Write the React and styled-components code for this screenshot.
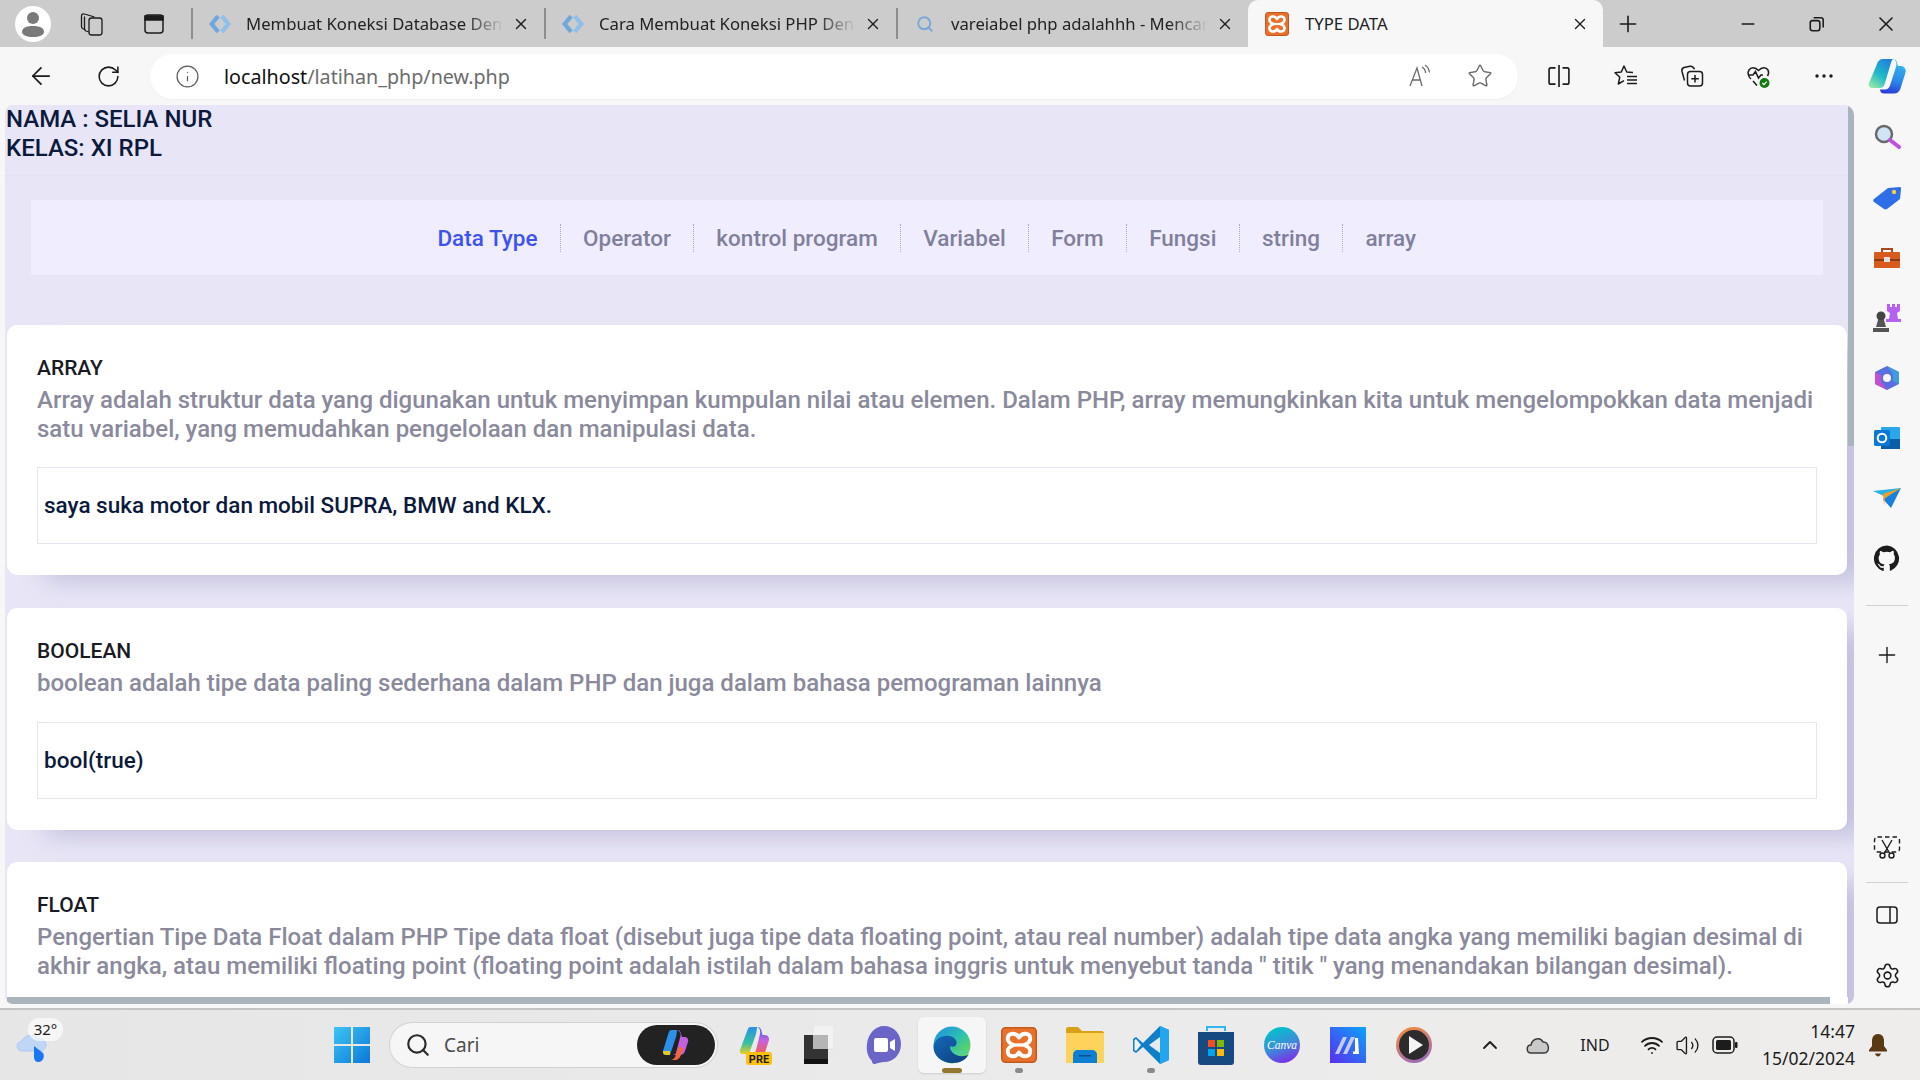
import React from 'react'
import styled, {createGlobalStyle} from 'styled-components'
import {ArrowLeft, RotateCw, Info, Star, Plus, Minus, X, Search, ChevronUp, Settings, Volume2, Wifi} from 'lucide-react'

const GlobalStyle = createGlobalStyle`
    html, body {
        margin: 0;
        padding: 0;
        width: 1920px;
        height: 1080px;
        overflow: hidden;
        background: #f7f7f7;
    }
    * {
        box-sizing: border-box;
    }
`

const Screen = styled.div`
    width: 1920px;
    height: 1080px;
    display: flex;
    flex-direction: column;
    overflow: hidden;
    font-family: "Noto Sans", "Liberation Sans", sans-serif;
    color: #1c1c1c;
`

/* tab strip */
const TabStrip = styled.div`
    height: 47px;
    display: flex;
    background: #cccccc;
    flex: none;
`

const StripActions = styled.div`
    width: 191px;
    height: 47px;
    display: flex;
    align-items: center;
    flex: none;
`

const StripSlot = styled.div`
    width: ${props => props.$width}px;
    display: flex;
    align-items: center;
    justify-content: center;
    flex: none;
`

const Avatar = styled.div`
    width: 36px;
    height: 36px;
    border-radius: 50%;
    background: #ffffff;
    display: flex;
    align-items: center;
    justify-content: center;
`

const Tab = styled.div`
    width: ${props => props.$width}px;
    height: 47px;
    padding: 0 14px 0 17px;
    display: flex;
    align-items: center;
    flex: none;
    position: relative;
    background: ${props => props.$active ? '#f7f7f7' : 'transparent'};
    border-radius: ${props => props.$active ? '10px 10px 0 0' : '0'};
    ${props => props.$active ? '' : `
        &::before {
            content: "";
            position: absolute;
            left: 0;
            top: 8px;
            bottom: 8px;
            width: 1.5px;
            background: #8e8e8e;
        }
    `}
`

const TabIcon = styled.div`
    width: 24px;
    height: 24px;
    flex: none;
    display: flex;
    align-items: center;
    justify-content: center;
`

const TabTitle = styled.div`
    flex: 1;
    margin-left: ${props => props.$active ? 16 : 14}px;
    font-size: 16.7px;
    line-height: 22px;
    white-space: nowrap;
    overflow: hidden;
    color: #222222;
    ${props => props.$active ? '' : `
        -webkit-mask-image: linear-gradient(to right, #000 85%, transparent 100%);
        mask-image: linear-gradient(to right, #000 85%, transparent 100%);
    `}
`

const TabClose = styled(X)`
    flex: none;
    margin-left: 8px;
    color: #1c1c1c;
`

const NewTab = styled.div`
    width: 50px;
    display: flex;
    align-items: center;
    justify-content: center;
    flex: none;
`

const WindowButtons = styled.div`
    margin-left: auto;
    display: flex;
    height: 47px;
`

const WindowButton = styled.div`
    width: 69px;
    display: flex;
    align-items: center;
    justify-content: center;
`

/* toolbar */
const Toolbar = styled.div`
    height: 57px;
    padding-top: 1px;
    display: flex;
    align-items: center;
    background: #f7f7f7;
    flex: none;
`

const ToolSlot = styled.div`
    width: ${props => props.$width}px;
    height: 45px;
    flex: none;
    display: flex;
    align-items: center;
    justify-content: center;
`

const AddressBar = styled.div`
    width: 1368px;
    height: 45px;
    margin-left: 16px;
    margin-right: 7px;
    flex: none;
    background: #ffffff;
    border-radius: 23px;
    display: flex;
    align-items: center;
    box-shadow: 0 1px 2px rgba(0, 0, 0, 0.04);
`

const Url = styled.div`
    font-size: 19.7px;
    flex: 1;
    color: #111111;
    span {
        color: #6c6c6c;
    }
`

/* middle row */
const Middle = styled.div`
    height: 904px;
    display: flex;
    flex: none;
    background: #f7f7f7;
`

const Page = styled.div`
    width: 1849px;
    height: 899px;
    margin-left: 5px;
    margin-top: 1px;
    position: relative;
    overflow: hidden;
    flex: none;
    background: #e8e6f6;
    border-radius: 8px 10px 8px 8px;
    font-family: Roboto, "Liberation Sans", sans-serif;
`

const PageHeader = styled.div`
    height: 70px;
    padding-left: 1px;
    font-size: 24px;
    font-weight: 500;
    line-height: 29px;
    color: #0b1a3c;
    background: #e8e6f6;
    box-shadow: 0 1px 2px rgba(120, 120, 170, 0.06);
`

const Nav = styled.nav`
    height: 75px;
    margin: 25px 31px 50px 26px;
    background: #f0eefe;
    display: flex;
    align-items: center;
    justify-content: center;
`

const NavLink = styled.a`
    font-size: 22.5px;
    font-weight: 500;
    line-height: 28px;
    padding: 0 22.5px 0 22px;
    color: ${props => props.$active ? '#3d53f0' : '#80809c'};
    border-left: ${props => props.$first ? 'none' : '1px dotted #a8a8c4'};
`

const Cards = styled.div`
    display: flex;
    flex-direction: column;
    margin: 0 7px 0 2px;
`

const Card = styled.section`
    background: #ffffff;
    border-radius: 10px;
    padding: 31px 30px 31px;
    margin-bottom: ${props => props.$gap}px;
    box-shadow: 30px 14px 26px -8px rgba(110, 105, 170, 0.3);
`

const CardTitle = styled.h3`
    margin: 0;
    font-size: 21px;
    font-weight: 500;
    line-height: 24px;
    color: #1a1a24;
`

const CardText = styled.p`
    margin: 6px 0 ${props => props.$after}px;
    font-size: 24px;
    font-weight: 500;
    line-height: 29px;
    color: #8a8a9c;
`

const Output = styled.div`
    height: 77px;
    border: 1px solid #e6e6f2;
    padding: 0 6px 2px;
    display: flex;
    align-items: center;
    font-size: 22.5px;
    font-weight: 500;
    color: #0b1a3c;
`

const VScroll = styled.div`
    position: absolute;
    top: 0;
    right: 0;
    width: 6px;
    height: 341px;
    background: #aab4bc;
`

const HScroll = styled.div`
    position: absolute;
    left: 2px;
    bottom: 0;
    width: 1823px;
    height: 7px;
    background: #aab4bc;
`

const HTrackEnd = styled.div`
    position: absolute;
    left: 1825px;
    right: 6px;
    bottom: 0;
    height: 7px;
    background: #ffffff;
`

const Sidebar = styled.aside`
    flex: 1;
    display: flex;
    flex-direction: column;
    align-items: center;
`

const SideSlot = styled.div`
    height: ${props => props.$height || 60}px;
    width: 100%;
    display: flex;
    align-items: center;
    justify-content: center;
    flex: none;
`

const SideRule = styled.div`
    width: 42px;
    height: 1px;
    background: #d0d0d0;
    flex: none;
`

const SideSpacer = styled.div`
    flex: 1;
`

/* taskbar */
const Taskbar = styled.footer`
    height: 72px;
    flex: none;
    display: flex;
    align-items: center;
    position: relative;
    background: linear-gradient(to right, #e6e6e6, #ebebeb 60%, #efedeb);
    border-top: 2px solid #c4c4c4;
`

const Weather = styled.div`
    width: 66px;
    height: 70px;
    position: relative;
    flex: none;
    margin-right: 253px;
    display: flex;
    align-items: center;
    justify-content: center;
`

const Temp = styled.div`
    position: absolute;
    left: 28px;
    top: 8px;
    width: 35px;
    height: 23px;
    border-radius: 12px;
    background: rgba(255, 255, 255, 0.65);
    font-size: 15px;
    line-height: 23px;
    text-align: center;
    color: #1c1c1c;
`

const TaskSlot = styled.div`
    width: ${props => props.$width || 66}px;
    height: 56px;
    flex: none;
    position: relative;
    display: flex;
    align-items: center;
    justify-content: center;
    border-radius: 6px;
    ${props => props.$active ? `
        background: #f6f6f6;
        box-shadow: 0 1px 2px rgba(0, 0, 0, 0.12);
    ` : ''}
`

const RunDot = styled.div`
    position: absolute;
    left: 50%;
    bottom: 0;
    transform: translateX(-50%);
    width: ${props => props.$wide ? 20 : 8}px;
    height: 5px;
    border-radius: 3px;
    background: ${props => props.$wide ? '#95782f' : '#8a8a8a'};
`

const SearchPill = styled.div`
    width: 327px;
    height: 44px;
    margin-left: 5px;
    margin-right: 5px;
    flex: none;
    position: relative;
    display: flex;
    align-items: center;
    padding-left: 15px;
    background: #f6f6f6;
    border-radius: 22px;
    box-shadow: 0 0 0 1px #d2d2d2;
    font-size: 19px;
    color: #4c4c4c;
`

const SearchLabel = styled.span`
    margin-left: 13px;
`

const CopilotPill = styled.div`
    position: absolute;
    right: 2px;
    top: 2px;
    width: 78px;
    height: 40px;
    border-radius: 20px;
    background: #222222;
    display: flex;
    align-items: center;
    justify-content: center;
`

const Tray = styled.div`
    margin-left: 26px;
    display: flex;
    align-items: center;
    flex: 1;
    height: 70px;
`

const TraySlot = styled.div`
    width: ${props => props.$width}px;
    display: flex;
    align-items: center;
    justify-content: center;
    flex: none;
    font-size: 16px;
    svg {
        flex: none;
    }
`

const Clock = styled.div`
    width: 96px;
    font-size: 17.5px;
    line-height: 27px;
    text-align: right;
    flex: none;
    white-space: nowrap;
    color: #1c1c1c;
`

/* drawings */
const CodeFavicon = () => (
    <svg width="26" height="24" viewBox="0 0 26 24" fill="none" strokeWidth="4.600">
        <path d="M11 3.500 4 12l7 8.500" stroke="#6fa8dc"/>
        <path d="M15 3.500 22 12l-7 8.500" stroke="#8fc0ea"/>
    </svg>
)

const XamppLogo = ({size = 24}) => (
    <svg width={size} height={size} viewBox="0 0 24 24">
        <rect x="0.500" y="0.500" width="23" height="23" rx="2.500" fill="#e8702a" stroke="#c25a1c"/>
        <path d="M12 7C10 3.500 4.500 3.500 4.500 8c0 2 2 3.200 4 4-2 .8-4 2-4 4 0 4.500 5.500 4.500 7.500 1 2 3.500 7.500 3.500 7.500-1 0-2-2-3.200-4-4 2-.8 4-2 4-4 0-4.500-5.500-4.500-7.500-1z" fill="none" stroke="#ffffff" strokeWidth="2.600" strokeLinejoin="round"/>
        <path d="M9 12h6" stroke="#ffffff" strokeWidth="2.200"/>
    </svg>
)

const SplitIcon = ({size = 24}) => (
    <svg width={size} height={size} viewBox="0 0 24 24" fill="none" stroke="#1c1c1c" strokeWidth="1.400">
        <path d="M9 5H5a1.500 1.500 0 0 0-1.500 1.500v11A1.500 1.500 0 0 0 5 19h4M15 5h4a1.500 1.500 0 0 1 1.500 1.500v11A1.500 1.500 0 0 1 19 19h-4M12 2.500v19"/>
    </svg>
)

const FavIcon = () => (
    <svg width="26" height="26" viewBox="0 0 26 26" fill="none" stroke="#1c1c1c" strokeWidth="1.500" strokeLinejoin="round">
        <path d="M20 9.500l-6.300-.5L11 3 8.300 9l-6.300.7 4.800 4.500L5.300 21l5.700-3.300"/>
        <path d="M14 13.500h10M14 17h10M14 20.500h10"/>
    </svg>
)

const CollectionsIcon = () => (
    <svg width="26" height="26" viewBox="0 0 26 26" fill="none" stroke="#1c1c1c" strokeWidth="1.500">
        <rect x="8.500" y="8.500" width="15" height="14.500" rx="3"/>
        <path d="M16 12v7.500M12.300 15.700h7.500M5.500 17.500 3 8.500c-.5-2 .5-3.500 2-4l6-1.300c1.800-.3 3.500.6 4.500 3"/>
    </svg>
)

const HeartIcon = () => (
    <svg width="28" height="28" viewBox="0 0 28 28">
        <path d="M6 17C3 14 2.500 10.500 4 8c2-3 6-3 9.500.5C17 5 21 5 23 8c1 2 .7 4-.5 6M3 13h5l2.500-3.500 3 6.500 2.500-3h2M8 19l4 4.500" fill="none" stroke="#1c1c1c" strokeWidth="1.500"/>
        <circle cx="19.500" cy="21" r="5" fill="#107c10"/>
        <path d="M17.300 21l1.600 1.600 2.800-3" fill="none" stroke="#ffffff" strokeWidth="1.300"/>
    </svg>
)

const ReadAloudIcon = () => (
    <svg width="26" height="26" viewBox="0 0 26 26" fill="none" stroke="#6a6a6a" strokeWidth="1.300">
        <path d="M3 23 10 5l5 18M5.500 17h8M15 4c2 1 3.300 3 3.600 6M18 2c2.500 1.500 4 4 4.500 7.500"/>
    </svg>
)

const MoreDots = () => (
    <svg width="20" height="6" viewBox="0 0 20 6" fill="#1c1c1c">
        <circle cx="3" cy="3" r="1.700"/>
        <circle cx="10" cy="3" r="1.700"/>
        <circle cx="17" cy="3" r="1.700"/>
    </svg>
)

const CopilotLogo = ({size = 38}) => (
    <svg width={size} height={size} viewBox="0 0 38 38">
        <defs>
            <linearGradient id="copA" x1="0.800" y1="0" x2="0.200" y2="1">
                <stop offset="0" stopColor="#1f7fe0"/>
                <stop offset="0.550" stopColor="#20b8c8"/>
                <stop offset="1" stopColor="#8fe8a8"/>
            </linearGradient>
            <linearGradient id="copB" x1="0.600" y1="0" x2="0.400" y2="1">
                <stop offset="0" stopColor="#38c0ee"/>
                <stop offset="0.600" stopColor="#2a8ae8"/>
                <stop offset="1" stopColor="#2a3ed8"/>
            </linearGradient>
        </defs>
        <path d="M15 2h10c-1.500 1.500-2 3.500-3 7l-5 17c-.5 3-2.500 5-5 5H5c-3 0-5-2-4-5L9 7c.7-3 3-5 6-5z" fill="url(#copA)"/>
        <path d="M25 2c2 0 3.500 1.500 4 3.500L30 9h2.500c3.500 0 6 3 5 6.500l-5 16c-.8 3-3.500 5-6.500 5H16c-2 0-3-1-3.500-2l-.5-2h5c2.500 0 4-1.500 5-4l6-18.500c1-3.500.5-6.500-3-8.500z" fill="url(#copB)"/>
    </svg>
)

const ColorCopilot = () => (
    <svg width="36" height="40" viewBox="0 0 36 40">
        <defs>
            <linearGradient id="cpcA" x1="0" y1="0" x2="0" y2="1">
                <stop offset="0" stopColor="#2a90e8"/>
                <stop offset="0.600" stopColor="#38c0a0"/>
                <stop offset="1" stopColor="#e8d020"/>
            </linearGradient>
            <linearGradient id="cpcB" x1="0" y1="0" x2="0" y2="1">
                <stop offset="0" stopColor="#2a60e8"/>
                <stop offset="0.500" stopColor="#c860e0"/>
                <stop offset="1" stopColor="#f06050"/>
            </linearGradient>
        </defs>
        <path d="M20 2h-6c-2 0-3 1-3.500 3L3 25c-.5 3 1 4 3 4h6l7-20c.5-2 1-5 1-7z" fill="url(#cpcA)"/>
        <path d="M20 2c3 0 4 2 4.500 4l1 4h2c3 0 5 2 4.500 5l-3.500 11c-.6 2-3 3-5 3h-9c3 0 4-2 4.500-4l4-16c.5-2 .5-6-3-7z" fill="url(#cpcB)"/>
        <rect x="9" y="27" width="26" height="13" rx="3" fill="#fbc10d"/>
        <text x="22" y="37.500" fontSize="11" fontWeight="700" textAnchor="middle" fill="#1c1c1c" fontFamily="Roboto, sans-serif">PRE</text>
    </svg>
)

const SmallCopilot = () => (
    <svg width="30" height="32" viewBox="0 0 30 32">
        <path d="M16 1h-5c-2 0-3 1-3.500 3L2 22c-.5 3 1 4 3 4h4l6-18c.5-2 1-5 1-7z" fill="#2a90e8"/>
        <path d="M16 1c3 0 3.500 2 4 4l1 3h2c3 0 5 2 4 5l-3 9c-.6 2-2 4-5 4h-8c3 0 4-1 4.500-4l4-15c.5-2-.5-5-3.500-6z" fill="#c45fe0"/>
        <path d="M9 31c3 0 5-2 5.500-4l3-9 5 1-3 8c-.8 2-3 4-5 4z" fill="#f2683c"/>
        <path d="M6 26c-3 0-4-1-4-4h7v4z" fill="#e8c820"/>
    </svg>
)

const WindowsLogo = () => (
    <svg width="36" height="36" viewBox="0 0 36 36">
        <defs>
            <linearGradient id="winA" x1="0" y1="0" x2="1" y2="1">
                <stop offset="0" stopColor="#3fc4f4"/>
                <stop offset="1" stopColor="#0a78d8"/>
            </linearGradient>
        </defs>
        <path d="M0 0h17v17H0zM19 0h17v17H19zM0 19h17v17H0zM19 19h17v17H19z" fill="url(#winA)"/>
    </svg>
)

const WeatherIcon = () => (
    <svg width="40" height="40" viewBox="0 0 40 40">
        <path d="M9 26c-6 0-7-9 0-10 2-6 12-8 16-2 8-1 11 8 4 12z" fill="#bfd6f6" stroke="#a8c8f4"/>
        <path d="M21 21l9 7c2 3 0 9-4.500 9-3 0-4.500-2-4.500-5z" fill="#1877f2"/>
    </svg>
)

const DarkStack = () => (
    <svg width="30" height="40" viewBox="0 0 30 40">
        <rect x="9" y="0" width="21" height="24" fill="#f2f2f2" stroke="#e2e2e2"/>
        <rect x="0" y="10" width="24" height="29" fill="#333333"/>
        <rect x="9" y="10" width="15" height="14" fill="#b5b5b5"/>
        <rect x="0" y="34" width="24" height="5" fill="#111111"/>
    </svg>
)

const ChatIcon = () => (
    <svg width="38" height="40" viewBox="0 0 38 40">
        <path d="M19 1c10 0 17 8 17 18 0 11-8 18-17 18-3 0-6 1-9 2-2 .5-3-1-3-3-4-4-6-10-5-17C3 9 10 1 19 1z" fill="#6b65c8"/>
        <rect x="9" y="13" width="14" height="14" rx="2" fill="#ffffff"/>
        <path d="M25 17l5-3v12l-5-3z" fill="#ffffff"/>
    </svg>
)

const EdgeLogo = () => (
    <svg width="38" height="38" viewBox="0 0 38 38">
        <defs>
            <linearGradient id="edgeA" x1="0.200" y1="0" x2="0.900" y2="0.800">
                <stop offset="0" stopColor="#2296dc"/>
                <stop offset="0.500" stopColor="#2cc0b0"/>
                <stop offset="1" stopColor="#6cd84c"/>
            </linearGradient>
            <linearGradient id="edgeB" x1="0" y1="0" x2="1" y2="1">
                <stop offset="0" stopColor="#1668b8"/>
                <stop offset="1" stopColor="#0c3f7c"/>
            </linearGradient>
        </defs>
        <circle cx="19" cy="19" r="18.500" fill="url(#edgeA)"/>
        <path d="M.600 20C2 13 9 9 16 10c6 1 9 5 7 9-1 2-4 2-6 1 0 6 6 11 14 10 2 0 4-1 5-2-3 6-9 9-16 9C9 37 0 30 .600 20z" fill="url(#edgeB)"/>
        <path d="M17 20c1 4 6 6 11 5 3-.5 6-1 8-3-.5 2-1 4-2 5.500-2 1.500-4 2-6 2-7 .500-11-4.500-11-9.500z" fill="#4cd0a8" opacity="0.700"/>
    </svg>
)

const FolderIcon = () => (
    <svg width="38" height="36" viewBox="0 0 38 36">
        <path d="M0 2c0-1 1-2 2-2h10l4 4h20c1 0 2 1 2 2v4H0z" fill="#d9a118"/>
        <path d="M0 6h38v30H0z" fill="#fdd35c"/>
        <path d="M7 36v-8c0-3 2-5 5-5h14c3 0 5 2 5 5v8z" fill="#0f7fd4"/>
        <rect x="13" y="28" width="12" height="1.500" fill="#0a4f90"/>
    </svg>
)

const VsCodeLogo = () => (
    <svg width="36" height="38" viewBox="0 0 36 38">
        <path d="M27 0 10 17 3 11 0 13v12l3 2 7-6 17 17 9-4V4z" fill="#0f7fc8"/>
        <path d="M27 0 36 4v30l-9 4z" fill="#22a6f0"/>
        <path d="M27 11 16 19l11 8z" fill="#f0f0f0" fillOpacity="0.950"/>
        <path d="M3 13l5 6-5 6-1.500-1V14z" fill="#f0f0f0"/>
    </svg>
)

const StoreLogo = () => (
    <svg width="36" height="40" viewBox="0 0 36 40">
        <path d="M9 6V2h18v4" fill="none" stroke="#2eb7f0" strokeWidth="2"/>
        <path d="M0 7h36v30c0 2-1 3-3 3H3c-2 0-3-1-3-3z" fill="#164a80"/>
        <rect x="10" y="15" width="7" height="7" fill="#f25022"/>
        <rect x="19" y="15" width="7" height="7" fill="#7fba00"/>
        <rect x="10" y="24" width="7" height="7" fill="#00a4ef"/>
        <rect x="19" y="24" width="7" height="7" fill="#ffb900"/>
    </svg>
)

const CanvaLogo = () => (
    <svg width="36" height="36" viewBox="0 0 36 36">
        <defs>
            <linearGradient id="canvaA" x1="0.300" y1="0" x2="0.700" y2="1">
                <stop offset="0" stopColor="#00c4cc"/>
                <stop offset="0.500" stopColor="#3a8ed8"/>
                <stop offset="1" stopColor="#7d2ae8"/>
            </linearGradient>
        </defs>
        <circle cx="18" cy="18" r="18" fill="url(#canvaA)"/>
        <text x="18" y="22" fontSize="11.500" fontStyle="italic" textAnchor="middle" fill="#ffffff" fontFamily="Liberation Serif, serif">Canva</text>
    </svg>
)

const MLogo = () => (
    <svg width="36" height="36" viewBox="0 0 36 36">
        <defs>
            <linearGradient id="mA" x1="0" y1="1" x2="1" y2="0">
                <stop offset="0" stopColor="#5a2ef0"/>
                <stop offset="1" stopColor="#0aa4f8"/>
            </linearGradient>
        </defs>
        <rect width="36" height="36" fill="url(#mA)"/>
        <path d="M5 27 13 10h4L9 27zM13 27l8-17h4l-8 17z" fill="#c8ccf4"/>
        <path d="M25 11h3l1 16h-6v-2.500h2z" fill="#ffffff"/>
    </svg>
)

const PlayLogo = () => (
    <svg width="36" height="36" viewBox="0 0 36 36">
        <defs>
            <linearGradient id="playA" x1="0.300" y1="0" x2="0.700" y2="1">
                <stop offset="0" stopColor="#f08a40"/>
                <stop offset="1" stopColor="#9a6ac0"/>
            </linearGradient>
        </defs>
        <circle cx="18" cy="18" r="18" fill="url(#playA)"/>
        <circle cx="18" cy="18" r="15" fill="#2c2c2c"/>
        <path d="M13 9 27 18 13 27z" fill="#f4f4f4"/>
    </svg>
)

const TagIcon = () => (
    <svg width="28" height="28" viewBox="0 0 28 28">
        <path d="M1 15 15 4l12-1c1 0 1 1 1 2l-1 10-13 10c-1 .5-2 .5-3 0l-10-7c-1-1-1-2 0-3z" fill="#2f6ee8"/>
        <circle cx="21" cy="8" r="2.200" fill="#f4d040"/>
    </svg>
)

const ToolboxIcon = () => (
    <svg width="28" height="24" viewBox="0 0 28 24">
        <path d="M9 6V3h10v3" fill="none" stroke="#a84a20" strokeWidth="2"/>
        <rect x="1" y="6" width="26" height="16" rx="1" fill="#d85a1c"/>
        <rect x="1" y="13" width="26" height="2" fill="#8e3a10"/>
        <rect x="11" y="11" width="6" height="5" fill="#e0e0e0"/>
    </svg>
)

const ChessIcon = () => (
    <svg width="30" height="30" viewBox="0 0 30 30">
        <path d="M15 1h3v3h2V1h3v3h2V1h3v7l-3 2 1 6h3v3H14v-3h3l1-6-3-2z" fill="#b760f0"/>
        <circle cx="9" cy="13" r="4.500" fill="#444444"/>
        <path d="M6 17h6l2 7H4zM1 25h16v4H1z" fill="#555555"/>
    </svg>
)

const M365Icon = () => (
    <svg width="28" height="26" viewBox="0 0 28 26">
        <path d="M14 1 26 7v12l-12 6L2 19V7z" fill="#5a6ee0"/>
        <path d="M14 1 26 7v12l-6-3V9.500z" fill="#3c9ee0"/>
        <path d="M2 19V7l6 3v6.500L14 25z" fill="#c44fd0"/>
        <circle cx="14" cy="13" r="4" fill="#f7f7f7"/>
    </svg>
)

const OutlookIcon = () => (
    <svg width="28" height="26" viewBox="0 0 28 26">
        <rect x="8" y="2" width="19" height="22" rx="1" fill="#28a8ea"/>
        <path d="M8 14h19v10H8z" fill="#0a5ea8"/>
        <rect x="1" y="5" width="16" height="16" rx="1.500" fill="#0a78d4"/>
        <circle cx="9" cy="13" r="4.300" fill="none" stroke="#ffffff" strokeWidth="2"/>
    </svg>
)

const PlaneIcon = () => (
    <svg width="28" height="22" viewBox="0 0 28 22">
        <path d="M0 4 28 1 15 11z" fill="#2cb0e8"/>
        <path d="M28 1 18 21l-8-9z" fill="#1a80e0"/>
        <path d="M10 7 28 1 12 11l-1 7z" fill="#f0a020"/>
    </svg>
)

const GithubIcon = () => (
    <svg width="26" height="26" viewBox="0 0 24 24" fill="#1c1c1c">
        <path d="M12 .500a12 12 0 0 0-3.800 23.400c.6.1.8-.3.8-.6v-2.200c-3.300.7-4-1.400-4-1.400-.6-1.400-1.400-1.800-1.400-1.800-1.100-.8.1-.7.1-.7 1.200.1 1.800 1.200 1.800 1.200 1.100 1.800 2.800 1.300 3.500 1 .1-.8.400-1.300.8-1.600-2.700-.3-5.500-1.300-5.500-5.900 0-1.300.5-2.400 1.200-3.200-.1-.3-.5-1.500.1-3.200 0 0 1-.3 3.300 1.200a11.500 11.500 0 0 1 6 0C17 5 18 5.300 18 5.300c.6 1.700.2 2.900.1 3.200.8.8 1.200 1.900 1.200 3.200 0 4.600-2.800 5.600-5.500 5.900.4.400.8 1.100.8 2.200v3.300c0 .3.2.7.8.6A12 12 0 0 0 12 .500z"/>
    </svg>
)

const MagnifierIcon = () => (
    <svg width="28" height="28" viewBox="0 0 28 28">
        <circle cx="11" cy="10" r="8" fill="#cfe4f4" stroke="#6a6a6a" strokeWidth="2.500"/>
        <path d="M17 16l9 7" stroke="#c050e0" strokeWidth="4" strokeLinecap="round"/>
    </svg>
)

const ScreenshotIcon = () => (
    <svg width="28" height="26" viewBox="0 0 28 26" fill="none" stroke="#1c1c1c" strokeWidth="1.400">
        <rect x="1.500" y="3" width="25" height="15" rx="3" strokeDasharray="4.500 3"/>
        <path d="M9 6l7.500 13M19 6l-7.500 13"/>
        <circle cx="9.500" cy="21.500" r="2.500"/>
        <circle cx="18.500" cy="21.500" r="2.500"/>
    </svg>
)

const PanelIcon = () => (
    <svg width="24" height="24" viewBox="0 0 24 24" fill="none" stroke="#1c1c1c" strokeWidth="1.500">
        <rect x="2" y="4" width="20" height="16" rx="3"/>
        <path d="M15 4v16"/>
    </svg>
)

const CollectionTabsIcon = () => (
    <svg width="26" height="26" viewBox="0 0 26 26" fill="none" stroke="#1c1c1c" strokeWidth="1.300">
        <rect x="10" y="7" width="13" height="17" rx="2.500"/>
        <path d="M10 21 7 20c-1-.5-1.500-1-1.500-2V5.500M6.500 19 3.500 17.500c-.7-.4-1-1-1-2V5c0-2 1.500-2.500 3-2l10 3"/>
    </svg>
)

const VerticalTabsIcon = () => (
    <svg width="24" height="24" viewBox="0 0 24 24" fill="none" stroke="#1c1c1c" strokeWidth="1.500">
        <rect x="3" y="3" width="18" height="18" rx="3"/>
        <path d="M3 4h18v4H3z" fill="#1c1c1c"/>
    </svg>
)

const RestoreIcon = () => (
    <svg width="18" height="18" viewBox="0 0 16 16" fill="none" stroke="#1c1c1c" strokeWidth="1.400">
        <rect x="2" y="5" width="8.500" height="9" rx="2"/>
        <path d="M5 2.500h6.500c1.300 0 2 .8 2 2V11"/>
    </svg>
)

const OneDriveIcon = () => (
    <svg width="26" height="24" viewBox="0 0 26 24">
        <path d="M6 20c-5 0-5-8 0-8 1-6 9-9 12-3 6-1 8 11 1 11z" fill="#c9c9c9" stroke="#3a3a3a" strokeWidth="1.500"/>
    </svg>
)

const BatteryIcon = () => (
    <svg width="26" height="20" viewBox="0 0 26 20">
        <rect x="1" y="2" width="21" height="16" rx="4" fill="none" stroke="#1c1c1c" strokeWidth="1.500"/>
        <rect x="4" y="5" width="15" height="10" rx="1.500" fill="#1c1c1c"/>
        <rect x="23" y="7" width="2.500" height="6" rx="1" fill="#1c1c1c"/>
    </svg>
)

const BellIcon = () => (
    <svg width="20" height="24" viewBox="0 0 20 24" fill="#5a3812">
        <path d="M10 1c4 0 6 3 6 7v5l3 4v1.500H1V17l3-4V8c0-4 2-7 6-7z"/>
        <path d="M7 20.500h6c-.5 2-2 3-3 3s-2.500-1-3-3z"/>
    </svg>
)

const tabs = [
    {title: 'Membuat Koneksi Database Dengan PHP', width: 353, icon: <CodeFavicon/>},
    {title: 'Cara Membuat Koneksi PHP Dengan', width: 352, icon: <CodeFavicon/>},
    {title: 'vareiabel php adalahhh - Mencari', width: 352, icon: <Search size={18} color="#7aa7d8" strokeWidth={2.500}/>},
]

const navItems = ['Data Type', 'Operator', 'kontrol program', 'Variabel', 'Form', 'Fungsi', 'string', 'array']

const sections = [
    {
        title: 'ARRAY',
        text: 'Array adalah struktur data yang digunakan untuk menyimpan kumpulan nilai atau elemen. Dalam PHP, array memungkinkan kita untuk mengelompokkan data menjadi satu variabel, yang memudahkan pengelolaan dan manipulasi data.',
        output: 'saya suka motor dan mobil SUPRA, BMW and KLX.',
        gap: 33,
        after: 23,
    },
    {
        title: 'BOOLEAN',
        text: 'boolean adalah tipe data paling sederhana dalam PHP dan juga dalam bahasa pemograman lainnya',
        output: 'bool(true)',
        gap: 32,
        after: 24,
    },
    {
        title: 'FLOAT',
        text: 'Pengertian Tipe Data Float dalam PHP Tipe data float (disebut juga tipe data floating point, atau real number) adalah tipe data angka yang memiliki bagian desimal di akhir angka, atau memiliki floating point (floating point adalah istilah dalam bahasa inggris untuk menyebut tanda " titik " yang menandakan bilangan desimal).',
        output: 'float(3.14)',
        gap: 32,
        after: 24,
    },
]

const sideTop = [<MagnifierIcon/>, <TagIcon/>, <ToolboxIcon/>, <ChessIcon/>, <M365Icon/>, <OutlookIcon/>, <PlaneIcon/>, <GithubIcon/>]

const taskApps = [
    {width: 66, icon: <ColorCopilot/>},
    {width: 62, icon: <DarkStack/>},
    {width: 68, icon: <ChatIcon/>},
    {width: 68, icon: <EdgeLogo/>, active: true, wide: true},
    {width: 66, icon: <XamppLogo size={36}/>, dot: true},
    {width: 66, icon: <FolderIcon/>},
    {width: 65, icon: <VsCodeLogo/>, dot: true},
    {width: 66, icon: <StoreLogo/>},
    {width: 66, icon: <CanvaLogo/>},
    {width: 66, icon: <MLogo/>},
    {width: 66, icon: <PlayLogo/>},
]

function App() {
    return (
        <Screen>
            <GlobalStyle/>
            <TabStrip>
                <StripActions>
                    <StripSlot $width={66}>
                        <Avatar>
                            <svg width="24" height="28" viewBox="0 0 24 28" fill="#7a7a7a">
                                <circle cx="12" cy="8" r="6"/>
                                <path d="M1 22c0-4 4-6 11-6s11 2 11 6c0 3-5 5-11 5S1 25 1 22z"/>
                            </svg>
                        </Avatar>
                    </StripSlot>
                    <StripSlot $width={52}><CollectionTabsIcon/></StripSlot>
                    <StripSlot $width={72}><VerticalTabsIcon/></StripSlot>
                </StripActions>
                {tabs.map(tab => (
                    <Tab key={tab.title} $width={tab.width}>
                        <TabIcon>{tab.icon}</TabIcon>
                        <TabTitle>{tab.title}</TabTitle>
                        <TabClose size={18} strokeWidth={1.800}/>
                    </Tab>
                ))}
                <Tab $width={355} $active>
                    <TabIcon><XamppLogo/></TabIcon>
                    <TabTitle $active>TYPE DATA</TabTitle>
                    <TabClose size={18} strokeWidth={1.800}/>
                </Tab>
                <NewTab><Plus size={26} strokeWidth={1.500}/></NewTab>
                <WindowButtons>
                    <WindowButton><Minus size={20} strokeWidth={1.800}/></WindowButton>
                    <WindowButton><RestoreIcon/></WindowButton>
                    <WindowButton><X size={24} strokeWidth={1.600}/></WindowButton>
                </WindowButtons>
            </TabStrip>
            <Toolbar>
                <ToolSlot $width={82}><ArrowLeft size={28} strokeWidth={1.500}/></ToolSlot>
                <ToolSlot $width={52}><RotateCw size={25} strokeWidth={1.500}/></ToolSlot>
                <AddressBar>
                    <ToolSlot $width={74}><Info size={25} strokeWidth={1.200} color="#5c5c5c"/></ToolSlot>
                    <Url>localhost<span>/latihan_php/new.php</span></Url>
                    <ToolSlot $width={60}><ReadAloudIcon/></ToolSlot>
                    <ToolSlot $width={60}><Star size={26} strokeWidth={1.300} color="#6a6a6a"/></ToolSlot>
                    <ToolSlot $width={8}/>
                </AddressBar>
                <ToolSlot $width={68}><SplitIcon size={28}/></ToolSlot>
                <ToolSlot $width={66}><FavIcon/></ToolSlot>
                <ToolSlot $width={66}><CollectionsIcon/></ToolSlot>
                <ToolSlot $width={67}><HeartIcon/></ToolSlot>
                <ToolSlot $width={64}><MoreDots/></ToolSlot>
                <ToolSlot $width={62}><CopilotLogo/></ToolSlot>
            </Toolbar>
            <Middle>
                <Page>
                    <PageHeader>
                        NAMA : SELIA NUR<br/>
                        KELAS: XI RPL
                    </PageHeader>
                    <Nav>
                        {navItems.map((item, index) => (
                            <NavLink key={item} $active={index === 0} $first={index === 0}>{item}</NavLink>
                        ))}
                    </Nav>
                    <Cards>
                        {sections.map(section => (
                            <Card key={section.title} $gap={section.gap}>
                                <CardTitle>{section.title}</CardTitle>
                                <CardText $after={section.after}>{section.text}</CardText>
                                <Output>{section.output}</Output>
                            </Card>
                        ))}
                    </Cards>
                    <VScroll/>
                    <HTrackEnd/>
                    <HScroll/>
                </Page>
                <Sidebar>
                    <SideSlot $height={4}/>
                    {sideTop.map((icon, index) => (
                        <SideSlot key={index}>{icon}</SideSlot>
                    ))}
                    <SideSlot $height={17}/>
                    <SideRule/>
                    <SideSlot $height={98}><Plus size={26} strokeWidth={1.300}/></SideSlot>
                    <SideSpacer/>
                    <SideSlot $height={70}><ScreenshotIcon/></SideSlot>
                    <SideRule/>
                    <SideSlot $height={64}><PanelIcon/></SideSlot>
                    <SideSlot $height={56}><Settings size={27} strokeWidth={1.400}/></SideSlot>
                    <SideSlot $height={5}/>
                </Sidebar>
            </Middle>
            <Taskbar>
                <Weather>
                    <WeatherIcon/>
                    <Temp>32°</Temp>
                </Weather>
                <TaskSlot $width={66}><WindowsLogo/></TaskSlot>
                <SearchPill>
                    <Search size={26} strokeWidth={2} color="#2a2a2a"/>
                    <SearchLabel>Cari</SearchLabel>
                    <CopilotPill><SmallCopilot/></CopilotPill>
                </SearchPill>
                {taskApps.map((app, index) => (
                    <TaskSlot key={index} $width={app.width} $active={app.active}>
                        {app.icon}
                        {(app.dot || app.wide) && <RunDot $wide={app.wide}/>}
                    </TaskSlot>
                ))}
                <Tray>
                    <TraySlot $width={34}><ChevronUp size={24} strokeWidth={1.800}/></TraySlot>
                    <TraySlot $width={62}><OneDriveIcon/></TraySlot>
                    <TraySlot $width={52}>IND</TraySlot>
                    <TraySlot $width={62}><Wifi size={24} strokeWidth={1.800}/></TraySlot>
                    <TraySlot $width={8}><Volume2 size={25} strokeWidth={1.300}/></TraySlot>
                    <TraySlot $width={68}><BatteryIcon/></TraySlot>
                    <Clock>14:47<br/>15/02/2024</Clock>
                    <TraySlot $width={46}><BellIcon/></TraySlot>
                </Tray>
            </Taskbar>
        </Screen>
    )
}

export default App
